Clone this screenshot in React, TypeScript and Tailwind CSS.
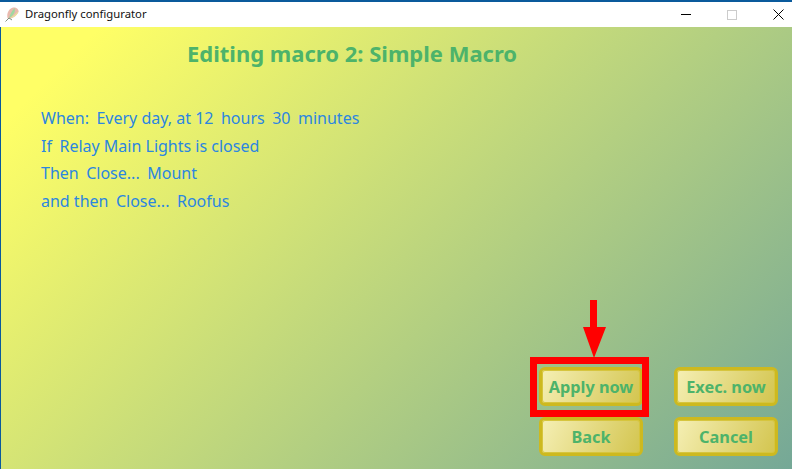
const ActionButton = ({ label }: { label: string }) => (
  <button className="w-[104px] h-[39px] pt-[1px] rounded-[6px] border-[3px] border-[#cdb91f] bg-[linear-gradient(115deg,#f5efb4,#d3c54f)] shadow-[inset_0_0_0_1px_#d6c53e] text-[#4db36a] text-[16.3px] font-bold">
    {label}
  </button>
);

const macroLines = [
  ["When:", "Every day, at 12", "hours", "30", "minutes"],
  ["If", "Relay Main Lights is closed"],
  ["Then", "Close...", "Mount"],
  ["and then", "Close...", "Roofus"],
];

const App = () => {
  return (
    <div className="w-[792px] h-[469px] flex flex-col overflow-hidden bg-white font-['Noto_Sans',sans-serif]">
      <div className="h-[2px] bg-[#0a5a9c]" />
      <div className="h-[25px] flex items-center bg-white pl-[4px]">
        <svg width="16" height="17" viewBox="0 0 16 17">
          <path d="M4 13 C2 9 4 3 9 1.500 C12 1 15 3 14.500 6 C12.500 10 8 13 4 13 Z" fill="#e9b9ae" />
          <path d="M5 12 C6 8 8 5 10.500 2 C12 6 9 10 5 12 Z" fill="#9fd8a0" />
          <path d="M6 12 C9 10 12 8 14.500 5 C13.500 9 10 12 6 12 Z" fill="#e8e29a" />
          <path d="M1.500 15.500 L5 12 M5 12 L8 14" stroke="#7f917f" strokeWidth="1" fill="none" />
        </svg>
        <span className="ml-[5px] text-[11.3px] text-[#111111]">Dragonfly configurator</span>
        <div className="ml-auto flex items-center">
          <div className="w-[10px] h-px bg-black mr-[36px]" />
          <div className="w-[10px] h-[10px] border border-[#cccccc] mr-[36px]" />
          <svg width="11" height="11" viewBox="0 0 11 11" className="mr-[8px]">
            <path d="M0.500 0.500 L10.500 10.500 M10.500 0.500 L0.500 10.500" stroke="#000" strokeWidth="1" />
          </svg>
        </div>
      </div>
      <div className="relative flex-1 border-l border-[#0a5a9c] bg-[linear-gradient(135deg,#ffff66_8%,#75a897)] pl-[40px]">
        <h1 className="pl-[146px] mt-[11px] text-[22px] leading-[30px] font-bold text-[#4db36a]">
          Editing macro 2: Simple Macro
        </h1>
        <div className="mt-[37px] text-[16px] leading-[27.5px] text-[#2b86e0]">
          {macroLines.map((parts) => (
            <div key={parts[0]} className="flex gap-[7.5px]">
              {parts.map((part) => (
                <span key={part}>{part}</span>
              ))}
            </div>
          ))}
        </div>
        <div className="absolute right-[14px] bottom-[13px] grid grid-cols-[104px_104px] gap-x-[31px] gap-y-[11px]">
          <ActionButton label="Apply now" />
          <ActionButton label="Exec. now" />
          <ActionButton label="Back" />
          <ActionButton label="Cancel" />
        </div>
        <div className="absolute left-[529px] top-[330px] w-[119px] h-[60px] border-[7px] border-[#ff0000]" />
        <svg className="absolute left-[581px] top-[273px]" width="26" height="59" viewBox="0 0 26 59">
          <path d="M8 0 H15 V27 H24 L12 58 L1 27 H8 Z" fill="#ff0000" />
        </svg>
      </div>
    </div>
  );
};

export default App;
